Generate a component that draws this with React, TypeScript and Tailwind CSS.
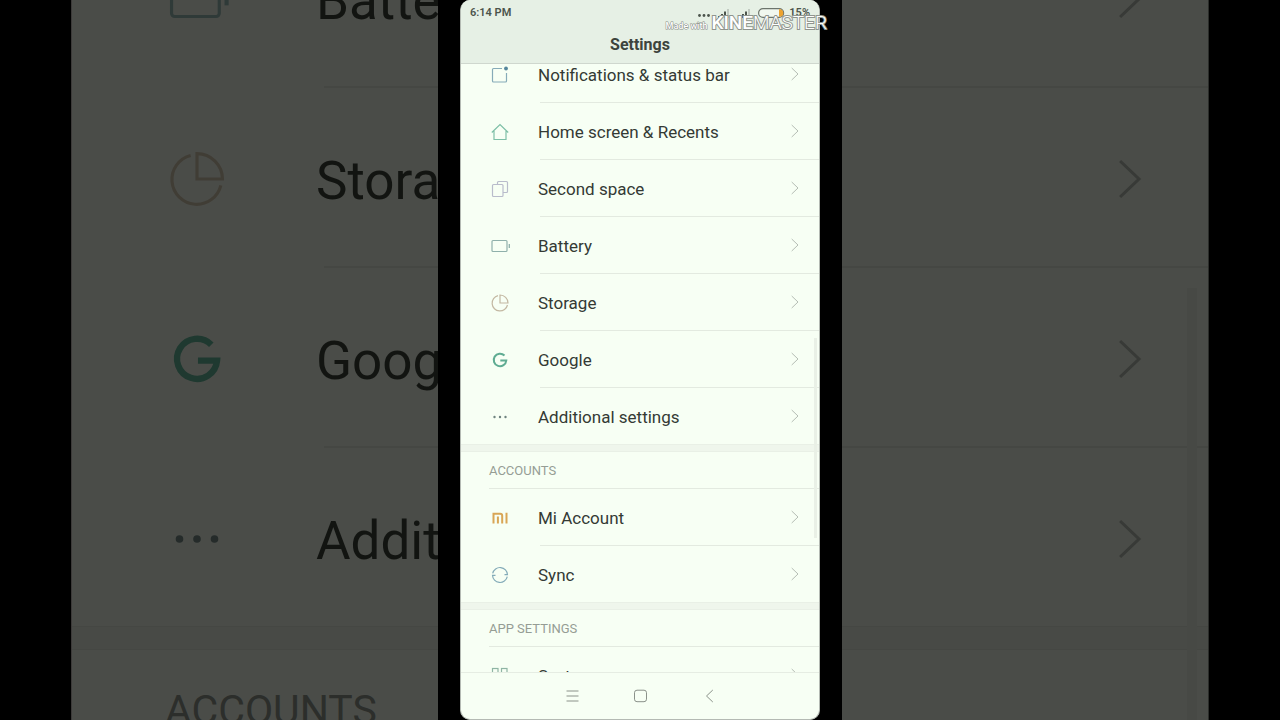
import React from 'react';

type IconName =
  | 'notifications'
  | 'home'
  | 'space'
  | 'battery'
  | 'storage'
  | 'google'
  | 'more'
  | 'mi'
  | 'sync'
  | 'apps';

interface Item {
  icon: IconName;
  label: string;
}

interface Section {
  title?: string;
  items: Item[];
}

const sections: Section[] = [
  {
    items: [
      { icon: 'notifications', label: 'Notifications & status bar' },
      { icon: 'home', label: 'Home screen & Recents' },
      { icon: 'space', label: 'Second space' },
      { icon: 'battery', label: 'Battery' },
      { icon: 'storage', label: 'Storage' },
      { icon: 'google', label: 'Google' },
      { icon: 'more', label: 'Additional settings' },
    ],
  },
  {
    title: 'ACCOUNTS',
    items: [
      { icon: 'mi', label: 'Mi Account' },
      { icon: 'sync', label: 'Sync' },
    ],
  },
  {
    title: 'APP SETTINGS',
    items: [{ icon: 'apps', label: 'System apps' }],
  },
];

const backdropItems: Item[] = sections[0].items.slice(3);

const shapes: Record<IconName, React.ReactNode> = {
  notifications: (
    <g stroke="#86abb8">
      <path d="M13 4.500H4.500a1 1 0 0 0-1 1v11.500a1 1 0 0 0 1 1h12a1 1 0 0 0 1-1V9" />
      <circle cx="17" cy="4.500" r="1.900" fill="#55869c" stroke="none" />
    </g>
  ),
  home: <path stroke="#7dbfa6" d="M2.800 11.500 11 3.500l8.200 8M5 10v8.500h12V10" />,
  space: (
    <g stroke="#b9bccb">
      <rect x="3.500" y="6.500" width="10.500" height="12" rx="1" />
      <path d="M8.500 6.500v-2a1 1 0 0 1 1-1h8a1 1 0 0 1 1 1v9a1 1 0 0 1-1 1h-3.500" />
    </g>
  ),
  battery: (
    <g stroke="#8fb0ab">
      <rect x="3" y="5.500" width="15" height="11" rx="1" />
      <path d="M20.300 9v4" strokeWidth="1.300" />
    </g>
  ),
  storage: (
    <g stroke="#c3b8a2">
      <path d="M9 3.600A7.800 7.800 0 1 0 18.500 13" />
      <path d="M11 3v8h8a8 8 0 0 0-8-8Z" />
    </g>
  ),
  google: <path stroke="#5fac92" strokeWidth="2" d="M15.500 6.500A6.300 6.300 0 1 0 17.300 11.500H11.300" />,
  more: (
    <g fill="#6f837f" stroke="none">
      <circle cx="5.500" cy="11" r="1.200" />
      <circle cx="11" cy="11" r="1.200" />
      <circle cx="16.500" cy="11" r="1.200" />
    </g>
  ),
  mi: (
    <g stroke="#d9a655" strokeWidth="2">
      <path d="M4.500 16.500V6.700h6.700a2 2 0 0 1 2 2v7.800" />
      <path d="M8.900 9.500v7M17.500 5.700v10.800" />
    </g>
  ),
  sync: (
    <g stroke="#83abb8">
      <path d="M3.700 9.300A7.500 7.500 0 0 1 18.500 10.700H15.500" />
      <path d="M18.300 12.700A7.500 7.500 0 0 1 3.500 11.300H6.500" />
    </g>
  ),
  apps: (
    <g stroke="#8fb5a4">
      <rect x="3.500" y="3.500" width="5.500" height="5.500" />
      <rect x="12.500" y="3.500" width="5.500" height="5.500" />
      <rect x="3.500" y="12.500" width="5.500" height="5.500" />
      <rect x="12.500" y="12.500" width="5.500" height="5.500" />
    </g>
  ),
};

const Icon: React.FC<{ name: IconName; className: string }> = ({ name, className }) => (
  <svg viewBox="0 0 22 22" fill="none" className={className} aria-hidden="true">
    {shapes[name]}
  </svg>
);

const Chevron: React.FC<{ className: string }> = ({ className }) => (
  <svg viewBox="0 0 8 14" fill="none" stroke="currentColor" className={className} aria-hidden="true">
    <path d="m.7 1 6.300 6-6.300 6" />
  </svg>
);

const StatusBar: React.FC = () => (
  <div className="flex h-[26px] items-center justify-between px-[9px] text-[11px] font-semibold text-[#4c544c]">
    <span>6:14 PM</span>
    <div className="flex items-center gap-1">
      <svg width="88" height="14" viewBox="0 0 88 14" aria-hidden="true">
        <g fill="#4c544c">
          <circle cx="2.500" cy="9.500" r="1.400" />
          <circle cx="7" cy="9.500" r="1.400" />
          <circle cx="11.500" cy="9.500" r="1.400" />
          <path d="M21 12v-2h2v2zM24 12V8h2v4zM27 12V5.500h2V12z" />
          <path d="M42 12v-2h2v2zM45 12V8h2v4zM48 12V5.500h2V12z" />
        </g>
        <path d="M30 12V3h2v9zM51 12V3h2v9z" fill="#c2cbc2" />
        <rect x="61.600" y="2.600" width="25" height="8.800" rx="4.400" fill="#f1f8ef" stroke="#6c746c" strokeWidth="1.200" />
        <path d="M82 3.200h.5a3.800 3.800 0 0 1 0 7.600H82z" fill="#eda32f" />
      </svg>
      <span>15%</span>
    </div>
  </div>
);

const Divider: React.FC<{ className: string }> = ({ className }) => (
  <div className={`h-px shrink-0 ${className}`} />
);

const SettingsSection: React.FC<{ section: Section }> = ({ section }) => (
  <section>
    {section.title && (
      <>
        <h2 className="flex h-9 items-center pt-0.5 pl-7 text-[13px] text-[#959d94]">{section.title}</h2>
        <Divider className="ml-7 bg-[#e3eae0]" />
      </>
    )}
    {section.items.map((item, i) => (
      <React.Fragment key={item.label}>
        {i > 0 && <Divider className="ml-[79px] bg-[#e3eae0]" />}
        <a href="#" className="flex h-14 items-center pr-5 pl-7">
          <Icon name={item.icon} className="mt-0.5 size-[22px] shrink-0 stroke-[1.2]" />
          <span className="ml-[27px] flex-1 pt-[3px] text-[17px] text-[#343a34]">{item.label}</span>
          <Chevron className="h-[14px] w-2 text-[#b5bdb4]" />
        </a>
      </React.Fragment>
    ))}
  </section>
);

const Phone: React.FC = () => (
  <div className="flex h-full flex-col overflow-hidden rounded-[10px] border-x border-b border-[#b4bab3] bg-[#f7fff4]">
    <header className="h-[63px] shrink-0 bg-[#e6f0e5]">
      <StatusBar />
      <h1 className="text-center text-base leading-[37px] font-bold text-[#3d443d]">Settings</h1>
    </header>
    <Divider className="bg-[#cfd7ce]" />

    <main className="relative min-h-0 flex-1 overflow-hidden">
      <div className="-mt-[18px]">
        {sections.map((section, i) => (
          <React.Fragment key={i}>
            {i > 0 && <div className="h-2 border-y border-[#e9f0e6] bg-[#eff6ec]" />}
            <SettingsSection section={section} />
          </React.Fragment>
        ))}
      </div>
      {/* scroll thumb */}
      <div className="absolute top-[45%] right-[2px] h-[33%] w-[3px] bg-[#e9f0e6]" />
    </main>

    <nav className="flex h-[47px] shrink-0 items-center justify-center gap-12 border-t border-[#e6ede3] text-[#8b928a]">
      <button type="button" aria-label="Recents" className="flex w-5 justify-center">
        <svg width="14" height="14" viewBox="0 0 14 14" stroke="currentColor" fill="none">
          <path d="M1.500 2h12M1.500 7h12M1.500 12h12" />
        </svg>
      </button>
      <button type="button" aria-label="Home" className="flex w-5 justify-center">
        <svg width="14" height="14" viewBox="0 0 14 14" stroke="currentColor" fill="none">
          <rect x="1.500" y="1.200" width="12" height="11.500" rx="2.500" />
        </svg>
      </button>
      <button type="button" aria-label="Back" className="flex w-5 justify-center">
        <svg width="14" height="14" viewBox="0 0 14 14" stroke="currentColor" fill="none">
          <path d="M11.800 1 5.500 7l6.300 6" />
        </svg>
      </button>
    </nav>
  </div>
);

// Enlarged, dimmed copy of the list on the left side of the phone
const LeftBackdrop: React.FC = () => (
  <div className="min-w-0 flex-1 overflow-hidden border-l border-[#3c3a39] bg-[#4a4c48]" aria-hidden="true">
    <div className="-mt-[92px]">
      {backdropItems.map((item, i) => (
        <React.Fragment key={item.label}>
          {i > 0 && <div className="ml-[252px] h-[2px] bg-[#454743]" />}
          <div className="flex h-[178px] items-center pt-1 pl-[90px]">
            <Icon name={item.icon} className="size-[70px] shrink-0 stroke-1 brightness-[0.33]" />
            <span className="ml-[84px] pt-1.5 text-[53px] whitespace-nowrap text-[#121411]">{item.label}</span>
          </div>
        </React.Fragment>
      ))}
      <div className="h-6 border-y border-[#454743] bg-[#484a46]" />
      <div className="flex h-[122px] items-center pl-[93px] text-[41px] text-[#2c2e2b]">ACCOUNTS</div>
    </div>
  </div>
);

const RightBackdrop: React.FC = () => (
  <div className="relative min-w-0 flex-1 overflow-hidden border-r border-[#2c2e2b] bg-[#4a4c48]" aria-hidden="true">
    <div className="-mt-[92px]">
      {backdropItems.map((item, i) => (
        <React.Fragment key={item.label}>
          {i > 0 && <div className="h-[2px] bg-[#454743]" />}
          <div className="flex h-[178px] items-center justify-end pt-1 pr-[66px]">
            <Chevron className="h-[42px] w-6 text-[#383a37]" />
          </div>
        </React.Fragment>
      ))}
      <div className="h-6 border-y border-[#454743] bg-[#484a46]" />
    </div>
    <div className="absolute top-[40%] right-[11px] bottom-0 w-[10px] bg-[#474945]" />
  </div>
);

const App: React.FC = () => (
  <div className="flex h-screen justify-center overflow-hidden bg-black px-[71px] font-[Roboto,sans-serif]">
    <LeftBackdrop />
    <div className="relative w-[404px] shrink-0 px-[22px]">
      <Phone />
      <div className="absolute top-2 right-[15px] flex items-center gap-1 leading-6 whitespace-nowrap text-white">
        <span className="pt-1.5 text-[9px] font-medium [-webkit-text-stroke:1px_#858b84] [paint-order:stroke_fill]">
          Made with
        </span>
        <span className="text-[19px] [-webkit-text-stroke:2px_#8f958e] [paint-order:stroke_fill]">
          <span className="font-medium">KINE</span>
          <span className="font-light">MASTER</span>
        </span>
      </div>
    </div>
    <RightBackdrop />
  </div>
);

export default App;
